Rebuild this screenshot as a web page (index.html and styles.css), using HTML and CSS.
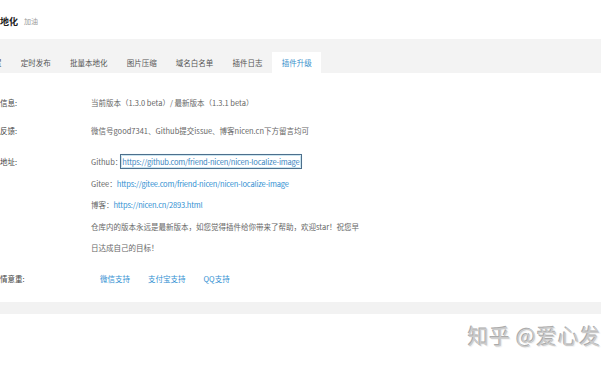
FILE: index.html
```html
<!DOCTYPE html>
<html lang="zh-CN">
<head>
<meta charset="utf-8">
<title>插件升级</title>
<link rel="stylesheet" href="styles.css">
</head>
<body>
<div class="page">
  <header class="head">
    <h1 class="title">本地化</h1>
    <span class="sub">加油</span>
  </header>
  <nav class="tabs">
    <span class="tab">基本设置</span>
    <span class="tab">定时发布</span>
    <span class="tab">批量本地化</span>
    <span class="tab">图片压缩</span>
    <span class="tab">域名白名单</span>
    <span class="tab">插件日志</span>
    <span class="tab tab-active">插件升级</span>
  </nav>
  <main class="content">
    <div class="row row-first">
      <div class="label">更新信息:</div>
      <div class="value">当前版本（1.3.0 beta）/ 最新版本（1.3.1 beta）</div>
    </div>
    <div class="row">
      <div class="label">问题反馈:</div>
      <div class="value">微信号good7341、Github提交issue、博客nicen.cn下方留言均可</div>
    </div>
    <div class="row">
      <div class="label">项目地址:</div>
      <div class="value lines">
        <div>Github：<a class="link link-focus" href="#">https://github.com/friend-nicen/nicen-localize-image</a></div>
        <div>Gitee：<a class="link" href="#">https://gitee.com/friend-nicen/nicen-localize-image</a></div>
        <div>博客：<a class="link" href="#">https://nicen.cn/2893.html</a></div>
        <p class="note">仓库内的版本永远是最新版本，如您觉得插件给你带来了帮助，欢迎star！祝您早日达成自己的目标！</p>
      </div>
    </div>
    <div class="row">
      <div class="label">打赏情意重:</div>
      <div class="value support">
        <a class="btn" href="#">微信支持</a>
        <a class="btn" href="#">支付宝支持</a>
        <a class="btn" href="#">QQ支持</a>
      </div>
    </div>
  </main>
  <div class="band"></div>
  <div class="foot"></div>
  <div class="watermark">知乎 @爱心发电</div>
</div>
</body>
</html>
```
FILE: styles.css
```css
html, body {
  margin: 0;
  padding: 0;
  background: #fff;
  overflow: hidden;
}
body {
  font-family: "Noto Sans CJK SC", "Noto Sans", sans-serif;
  color: #666;
  width: 601px;
  height: 366px;
}
.page {
  position: relative;
  width: 601px;
  height: 366px;
  overflow: hidden;
}
.head {
  height: 39px;
  display: flex;
  align-items: center;
  gap: 6px;
  padding-top: 3px;
  box-sizing: border-box;
}
.title {
  margin: 0 0 0 -9px;
  font-size: 9px;
  font-weight: 700;
  color: #222;
  line-height: 1;
}
.sub {
  font-size: 7px;
  color: #999;
  line-height: 1;
  padding-top: 1px;
}
.tabs {
  height: 34px;
  background: #f3f3f3;
  display: flex;
  align-items: flex-end;
  margin-left: -38px;
}
.tab {
  font-size: 7.5px;
  line-height: 21px;
  height: 21px;
  padding: 0 9.6px;
  color: #555;
  white-space: nowrap;
}
.tab-active {
  background: #fff;
  color: #3b91cc;
}
.content {
  padding: 19px 0 12px 0;
  font-size: 7.5px;
}
.row {
  display: grid;
  grid-template-columns: 106px 1fr;
  margin-left: -15px;
  line-height: 22px;
  margin-top: 9px;
}
.row-first {
  margin-top: 0;
  margin-bottom: -3px;
}
.label {
  color: #444;
  white-space: nowrap;
}
.value {
  color: #666;
  white-space: nowrap;
}
.lines {
  line-height: 21.5px;
  white-space: normal;
}
.lines > div {
  white-space: nowrap;
}
.note {
  margin: 0;
  width: 272px;
}
.link {
  color: #3190d2;
  text-decoration: none;
  letter-spacing: -0.18px;
}
.link-focus {
  outline: 1px solid #4d6f8c;
  outline-offset: 1px;
  box-shadow: 0 0 2px 1px rgba(30, 140, 190, 0.35);
  color: #3a86bf;
}
.support {
  display: flex;
}
.btn {
  color: #3190d2;
  text-decoration: none;
  padding: 0 9px;
}
.band {
  height: 12px;
  background: #f2f2f2;
}
.foot {
  height: 52px;
}
.watermark {
  position: absolute;
  left: 468px;
  top: 322px;
  font-size: 21px;
  line-height: 26px;
  color: #cbcbcb;
  white-space: nowrap;
  text-shadow: -1px -1px 0 #ababab, 1px 1px 0 #f4f4f4;
  letter-spacing: 0.5px;
}
```
